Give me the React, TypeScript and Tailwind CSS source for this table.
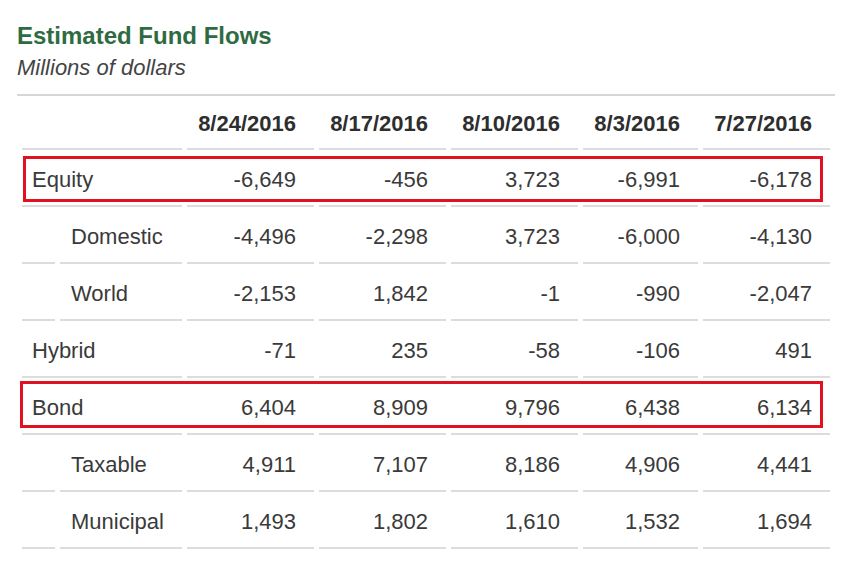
const DATES = ["8/24/2016", "8/17/2016", "8/10/2016", "8/3/2016", "7/27/2016"];

interface Row {
  label: string;
  sub?: boolean;
  boxed?: "equity" | "bond";
  values: string[];
}

const ROWS: Row[] = [
  { label: "Equity", boxed: "equity", values: ["-6,649", "-456", "3,723", "-6,991", "-6,178"] },
  { label: "Domestic", sub: true, values: ["-4,496", "-2,298", "3,723", "-6,000", "-4,130"] },
  { label: "World", sub: true, values: ["-2,153", "1,842", "-1", "-990", "-2,047"] },
  { label: "Hybrid", values: ["-71", "235", "-58", "-106", "491"] },
  { label: "Bond", boxed: "bond", values: ["6,404", "8,909", "9,796", "6,438", "6,134"] },
  { label: "Taxable", sub: true, values: ["4,911", "7,107", "8,186", "4,906", "4,441"] },
  { label: "Municipal", sub: true, values: ["1,493", "1,802", "1,610", "1,532", "1,694"] },
];

const cell = "border-b-2 border-[#dcdcdc] align-middle p-0";
const body = "border-b-2 border-[#dcdcdc] align-middle pt-[4px] pb-0";

export default function App() {
  return (
    <div
      className="h-[569px] w-[850px] overflow-hidden bg-white text-[#3a3a3a]"
      style={{ fontFamily: '"Liberation Sans", Arial, sans-serif' }}
    >
      <div className="pl-[17px] pt-[22px]">
        <h1 className="text-[24px] font-bold leading-[28px] text-[#2f6b42]">Estimated Fund Flows</h1>
        <p className="mt-[5px] text-[22px] italic leading-[26px] text-[#444]">Millions of dollars</p>
      </div>

      <div className="ml-[17px] mt-[13px] w-[818px] border-t-2 border-[#d6d6d6]">
        <table className="w-[818px] table-fixed border-separate border-spacing-x-[5px] border-spacing-y-0 text-[22px]">
          <colgroup>
            <col className="w-[33px]" />
            <col className="w-[122px]" />
            <col className="w-[127px]" />
            <col className="w-[127px]" />
            <col className="w-[127px]" />
            <col className="w-[115px]" />
            <col className="w-[127px]" />
          </colgroup>
          <thead>
            <tr className="h-[54px]">
              <th colSpan={2} className={cell} />
              {DATES.map((d) => (
                <th key={d} className={`${cell} pt-[2px] pr-[18px] text-right font-bold text-[#2e2e2e]`}>
                  {d}
                </th>
              ))}
            </tr>
          </thead>
          <tbody>
            {ROWS.map((r) => (
              <tr key={r.label} className="h-[57px]">
                {r.sub ? (
                  <>
                    <td className={body} />
                    <td className={`${body} pl-[11px]`}>{r.label}</td>
                  </>
                ) : (
                  <td colSpan={2} className={`${body} relative pl-[10px]`}>
                    {r.label}
                    {r.boxed === "equity" && (
                      <div className="pointer-events-none absolute left-[1px] top-[6px] h-[46px] w-[800px] border-[3px] border-[#e2111f]" />
                    )}
                    {r.boxed === "bond" && (
                      <div className="pointer-events-none absolute left-[-2px] top-[3px] h-[47px] w-[803px] border-[3px] border-[#e2111f]" />
                    )}
                  </td>
                )}
                {r.values.map((v, i) => (
                  <td key={i} className={`${body} pr-[18px] text-right`}>
                    {v}
                  </td>
                ))}
              </tr>
            ))}
          </tbody>
        </table>
      </div>
    </div>
  );
}
